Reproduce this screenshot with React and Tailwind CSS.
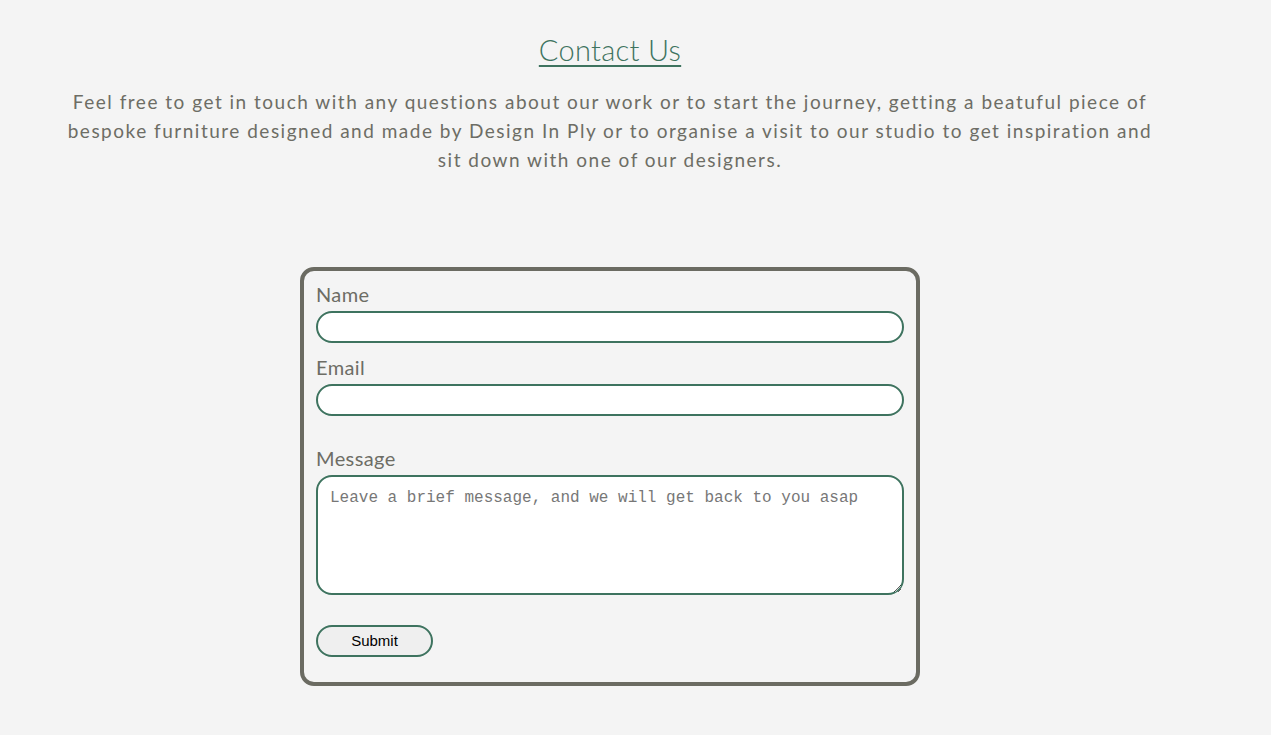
export default function App() {
  return (
    <div className="min-h-[735px] w-full bg-[#f4f4f4]" style={{ fontFamily: 'Lato, "Noto Sans", sans-serif' }}>
      <div className="w-[1220px] flex flex-col items-center">
        <h1 className="mt-[30px] text-[29px] leading-[40px] font-light text-[#3e735f] underline underline-offset-[4px] decoration-[2px] tracking-[0.3px]">
          Contact Us
        </h1>
        <p className="mt-[17px] w-[1098px] text-center text-[19px] leading-[29px] tracking-[1.5px] text-[#6d6d65]">
          Feel free to get in touch with any questions about our work or to start the journey, getting a beatuful piece of bespoke furniture designed and made by Design In Ply or to organise a visit to our studio to get inspiration and sit down with one of our designers.
        </p>
        <form className="mt-[93px] w-[620px] rounded-[14px] border-4 border-[#6b6b62] px-3 pt-[9px] pb-[25px] flex flex-col">
          <label className="text-[20px] leading-[28px] tracking-[0.4px] text-[#6d6d65]">Name</label>
          <input className="mt-[3px] h-[32px] w-full rounded-full border-2 border-[#3e735f] bg-white px-3 outline-none" />
          <label className="mt-[10px] text-[20px] leading-[28px] tracking-[0.4px] text-[#6d6d65]">Email</label>
          <input className="mt-[3px] h-[32px] w-full rounded-full border-2 border-[#3e735f] bg-white px-3 outline-none" />
          <label className="mt-[28px] text-[20px] leading-[28px] tracking-[0.4px] text-[#6d6d65]">Message</label>
          <textarea
            placeholder="Leave a brief message, and we will get back to you asap"
            className="mt-[3px] h-[120px] w-full rounded-[16px] border-2 border-[#3e735f] bg-white px-3 pt-[11px] text-[16px] leading-[20px] text-black placeholder:text-[#777] outline-none"
            style={{ fontFamily: '"Liberation Mono", monospace' }}
          />
          <button
            type="button"
            className="mt-[30px] h-[32px] w-[117px] rounded-full border-2 border-[#3e735f] bg-[#efefef] text-[15px] text-black"
            style={{ fontFamily: '"Liberation Sans", Arial, sans-serif' }}
          >
            Submit
          </button>
        </form>
      </div>
    </div>
  )
}
